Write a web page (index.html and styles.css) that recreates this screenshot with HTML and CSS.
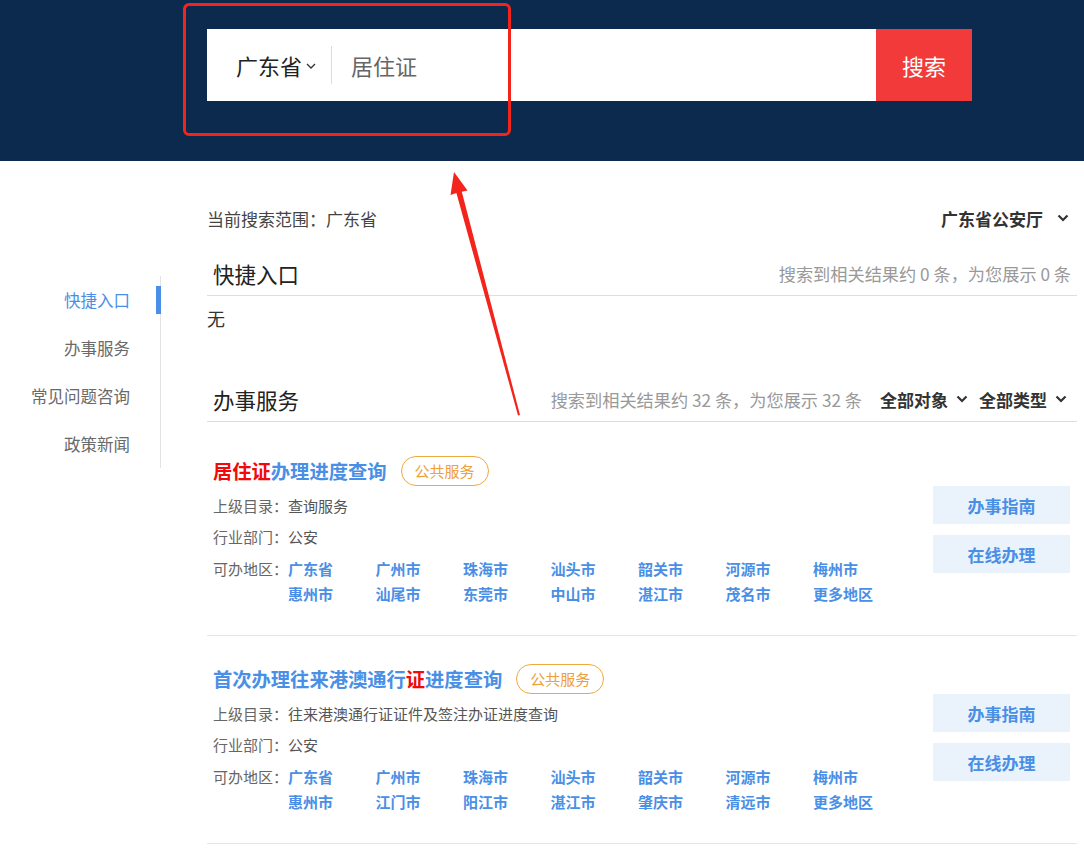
FILE: index.html
```html
<!DOCTYPE html>
<html lang="zh-CN">
<head>
<meta charset="utf-8">
<title>搜索</title>
<link rel="stylesheet" href="styles.css">
</head>
<body>
<header class="top">
  <div class="search">
    <div class="region">广东省<svg class="chev-sm" width="10" height="6" viewBox="0 0 10 6"><polyline points="1,1 5,5 9,1" fill="none" stroke="#333" stroke-width="1.3"/></svg></div>
    <div class="divider"></div>
    <div class="query">居住证</div>
    <div class="btn-search">搜索</div>
  </div>
</header>

<div class="page">
  <nav class="side">
    <div class="side-item active">快捷入口</div>
    <div class="side-item">办事服务</div>
    <div class="side-item">常见问题咨询</div>
    <div class="side-item">政策新闻</div>
  </nav>

  <main class="content">
    <div class="scope">
      <span>当前搜索范围：广东省</span>
      <span class="dept">广东省公安厅<svg class="chev" width="12" height="8" viewBox="0 0 12 8"><polyline points="1.5,1.5 6,6 10.5,1.5" fill="none" stroke="#333" stroke-width="2.2"/></svg></span>
    </div>

    <div class="sec-head">
      <h2>快捷入口</h2>
      <span class="count">搜索到相关结果约 0 条，为您展示 0 条</span>
    </div>
    <div class="empty">无</div>

    <div class="sec-head sec-services">
      <h2>办事服务</h2>
      <div class="head-right">
        <span class="count">搜索到相关结果约 32 条，为您展示 32 条</span>
        <span class="filter">全部对象<svg class="chev" width="12" height="8" viewBox="0 0 12 8"><polyline points="1.5,1.5 6,6 10.5,1.5" fill="none" stroke="#333" stroke-width="2.2"/></svg></span>
        <span class="filter">全部类型<svg class="chev" width="12" height="8" viewBox="0 0 12 8"><polyline points="1.5,1.5 6,6 10.5,1.5" fill="none" stroke="#333" stroke-width="2.2"/></svg></span>
      </div>
    </div>

    <div class="list">
      <div class="card">
        <div class="info">
          <div class="title"><span class="hl">居住证</span>办理进度查询<span class="tag">公共服务</span></div>
          <div class="row"><span class="label">上级目录：</span>查询服务</div>
          <div class="row"><span class="label">行业部门：</span>公安</div>
          <div class="row region-row">
            <span class="label">可办地区：</span>
            <div class="cities">
              <a>广东省</a><a>广州市</a><a>珠海市</a><a>汕头市</a><a>韶关市</a><a>河源市</a><a>梅州市</a>
              <a>惠州市</a><a>汕尾市</a><a>东莞市</a><a>中山市</a><a>湛江市</a><a>茂名市</a><a>更多地区</a>
            </div>
          </div>
        </div>
        <div class="actions">
          <div class="act">办事指南</div>
          <div class="act">在线办理</div>
        </div>
      </div>

      <div class="card">
        <div class="info">
          <div class="title">首次办理往来港澳通行<span class="hl">证</span>进度查询<span class="tag">公共服务</span></div>
          <div class="row"><span class="label">上级目录：</span>往来港澳通行证证件及签注办证进度查询</div>
          <div class="row"><span class="label">行业部门：</span>公安</div>
          <div class="row region-row">
            <span class="label">可办地区：</span>
            <div class="cities">
              <a>广东省</a><a>广州市</a><a>珠海市</a><a>汕头市</a><a>韶关市</a><a>河源市</a><a>梅州市</a>
              <a>惠州市</a><a>江门市</a><a>阳江市</a><a>湛江市</a><a>肇庆市</a><a>清远市</a><a>更多地区</a>
            </div>
          </div>
        </div>
        <div class="actions">
          <div class="act">办事指南</div>
          <div class="act">在线办理</div>
        </div>
      </div>
    </div>
  </main>
</div>

<div class="annot-box"></div>
<svg class="annot-arrow" width="1084" height="862" viewBox="0 0 1084 862">
  <polygon points="454,172 467.5,190.5 461.8,191.8 520,415 518,415.4 456.4,193 450.5,195" fill="#f2241c"/>
</svg>
</body>
</html>
```

FILE: styles.css
```css
* { box-sizing: border-box; }
html, body { margin: 0; padding: 0; }
body {
  font-family: "Noto Sans CJK SC", "Noto Sans", sans-serif;
  color: #333;
  background: #fff;
  width: 1084px;
  height: 862px;
  overflow: hidden;
  position: relative;
}

/* header */
.top {
  background: #0b2a4d;
  height: 161px;
  padding-top: 29px;
}
.search {
  margin-left: 207px;
  width: 765px;
  height: 72px;
  background: #fff;
  display: flex;
  align-items: center;
}
.region {
  padding-left: 29px;
  padding-right: 15px;
  font-size: 22px;
  color: #222;
  display: flex;
  align-items: center;
}
.chev-sm { margin-left: 4px; margin-top: 2px; }
.divider {
  width: 1px;
  height: 38px;
  background: #dcdcdc;
}
.query {
  flex: 1;
  padding-left: 19px;
  font-size: 22px;
  color: #666;
}
.btn-search {
  width: 96px;
  height: 72px;
  background: #f23a3a;
  color: #fff;
  font-size: 22px;
  display: flex;
  align-items: center;
  justify-content: center;
}

/* layout */
.page {
  display: flex;
}
.side {
  width: 161px;
  margin-top: 115px;
  border-right: 1px solid #e3e3e3;
  align-self: flex-start;
}
.side-item {
  position: relative;
  height: 48px;
  line-height: 48px;
  text-align: right;
  padding-right: 30px;
  font-size: 16.5px;
  color: #6a6a6a;
}
.side-item.active { color: #4a8fe6; }
.side-item.active::after {
  content: "";
  position: absolute;
  right: -1px;
  top: 10px;
  width: 5px;
  height: 28px;
  background: #4a8fe6;
}

.content {
  margin-left: 46px;
  width: 870px;
  padding-top: 44px;
}
.scope {
  display: flex;
  justify-content: space-between;
  align-items: center;
  height: 26px;
  font-size: 17px;
  color: #444;
  padding-right: 8px;
}
.dept {
  font-weight: bold;
  font-size: 17px;
  color: #333;
  display: flex;
  align-items: center;
}
.chev { margin-left: 14px; }

.sec-head {
  margin-top: 20px;
  height: 45px;
  border-bottom: 1px solid #dedede;
  display: flex;
  justify-content: space-between;
  align-items: center;
  padding: 0 6px;
}
.sec-head h2 {
  margin: 0;
  font-size: 21.5px;
  font-weight: normal;
  color: #222;
}
.count {
  font-size: 17.2px;
  color: #999;
}
.empty {
  margin-top: 9px;
  font-size: 18px;
  line-height: 26px;
  color: #333;
}
.sec-services { margin-top: 46px; padding-right: 10px; }
.head-right {
  display: flex;
  align-items: center;
}
.filter {
  margin-left: 11px;
  font-weight: bold;
  font-size: 17px;
  color: #333;
  display: flex;
  align-items: center;
}
.filter:nth-of-type(2) { margin-left: 18px; }
.filter .chev { margin-left: 8px; }

/* cards */
.list { padding-top: 6px; }
.card {
  display: flex;
  padding: 28px 7px 29px 6px;
  border-bottom: 1px solid #e5e5e5;
}
.info { flex: 1; }
.title {
  height: 30px;
  line-height: 30px;
  font-size: 19.3px;
  font-weight: bold;
  color: #4a8fe6;
  display: flex;
  align-items: center;
}
.title .hl { color: #f00a0a; }
.tag {
  margin-left: 14px;
  height: 30px;
  line-height: 28px;
  padding: 0 13px;
  border: 1px solid #eeaa3a;
  border-radius: 15px;
  color: #eea03a;
  font-size: 15px;
  font-weight: normal;
}
.row {
  font-size: 15px;
  line-height: 31px;
  color: #555;
}
.row:nth-child(2) { margin-top: 4px; }
.label {
  display: inline-block;
  width: 75px;
  color: #666;
}
.region-row {
  display: flex;
  line-height: 25px;
  margin-top: 4px;
}
.cities {
  display: grid;
  grid-template-columns: repeat(7, 87.5px);
}
.cities a {
  color: #4a8fe6;
  font-weight: bold;
  font-size: 15px;
}
.actions {
  width: 137px;
  padding-top: 30px;
  display: flex;
  flex-direction: column;
  gap: 11px;
}
.act {
  height: 38px;
  background: #eaf3fc;
  color: #4a8fe6;
  font-weight: bold;
  font-size: 17px;
  display: flex;
  align-items: center;
  justify-content: center;
}

/* annotations */
.annot-box {
  position: absolute;
  left: 183px;
  top: 3px;
  width: 328px;
  height: 133px;
  border: 3px solid #f2241c;
  border-radius: 6px;
}
.annot-arrow {
  position: absolute;
  left: 0;
  top: 0;
  pointer-events: none;
}
```
